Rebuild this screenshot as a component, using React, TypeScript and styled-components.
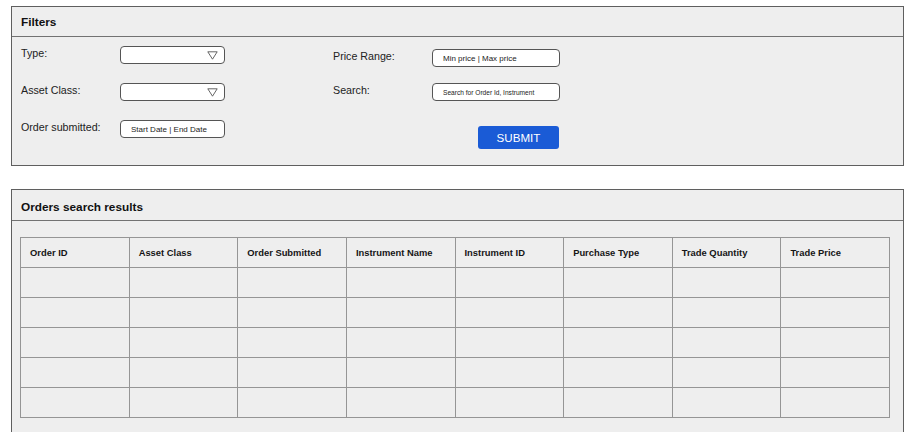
import styled, { createGlobalStyle } from "styled-components";

const GlobalStyle = createGlobalStyle`
  html, body {
    margin: 0;
    padding: 0;
    background: #ffffff;
  }
  body {
    font-family: "Liberation Sans", Arial, sans-serif;
    color: #1f1f1f;
  }
`;

const Page = styled.div`
  display: flex;
  flex-direction: column;
  gap: 23px;
  padding: 6px 0 0 11px;
`;

const Panel = styled.section`
  width: 893px;
  box-sizing: border-box;
  border: 1px solid #5f5f5f;
  background: #eeeeee;
`;

const PanelHeader = styled.div<{ $height: number; $nudge: number }>`
  height: ${(p) => p.$height}px;
  box-sizing: border-box;
  display: flex;
  align-items: center;
  padding: ${(p) => p.$nudge}px 0 0 9px;
  border-bottom: 1px solid #727272;
  font-size: 11.8px;
  font-weight: 700;
  color: #111111;
`;

const FilterBody = styled.div`
  display: grid;
  grid-template-columns: 312px 1fr;
  padding: 9px 0 16px 9px;
`;

const Column = styled.div<{ $gap: number; $offset: number }>`
  display: flex;
  flex-direction: column;
  gap: ${(p) => p.$gap}px;
  padding-top: ${(p) => p.$offset}px;
`;

const Field = styled.div`
  display: flex;
  align-items: flex-start;
`;

const Label = styled.span`
  width: 99px;
  font-size: 10.7px;
  line-height: 14px;
  color: #222222;
`;

const Box = styled.div<{ $width: number; $size: number }>`
  width: ${(p) => p.$width}px;
  height: 18px;
  box-sizing: border-box;
  display: flex;
  align-items: center;
  justify-content: space-between;
  padding: 0 6px 0 10px;
  border: 1px solid #555555;
  border-radius: 4px;
  background: #ffffff;
  font-size: ${(p) => p.$size}px;
  color: #222222;
  white-space: nowrap;
`;

const Caret = styled.svg`
  width: 11px;
  height: 9px;
  flex-shrink: 0;
`;

const Actions = styled.div`
  padding-left: 145px;
  margin-top: 9px;
`;

const SubmitButton = styled.button`
  width: 81px;
  height: 23px;
  border: none;
  border-radius: 3px;
  background: #1a5bd6;
  color: #ffffff;
  font-family: "Liberation Sans", Arial, sans-serif;
  font-size: 11.6px;
  padding: 0;
  cursor: pointer;
`;

const ResultsBody = styled.div`
  padding: 16px 13px 20px 8px;
`;

const Table = styled.table`
  width: 870px;
  border-collapse: collapse;
  table-layout: fixed;
`;

const Th = styled.th`
  height: 29px;
  padding: 0 9px;
  border: 1px solid #959595;
  text-align: left;
  font-size: 9.4px;
  font-weight: 700;
  color: #151515;
`;

const Td = styled.td`
  height: 29px;
  padding: 0;
  border: 1px solid #959595;
`;

const columns = [
  "Order ID",
  "Asset Class",
  "Order Submitted",
  "Instrument Name",
  "Instrument ID",
  "Purchase Type",
  "Trade Quantity",
  "Trade Price",
];

const rows = [0, 1, 2, 3, 4];

function DropCaret() {
  return (
    <Caret viewBox="0 0 11 9">
      <path d="M0.8 0.8 L10.2 0.8 L5.5 8.2 Z" fill="none" stroke="#555" strokeWidth="0.9" strokeLinejoin="round" />
    </Caret>
  );
}

export default function App() {
  return (
    <>
      <GlobalStyle />
      <Page>
        <Panel>
          <PanelHeader $height={30} $nudge={1}>Filters</PanelHeader>
          <FilterBody>
            <Column $gap={19} $offset={0}>
              <Field>
                <Label>Type:</Label>
                <Box $width={105} $size={8}>
                  <span />
                  <DropCaret />
                </Box>
              </Field>
              <Field>
                <Label>Asset Class:</Label>
                <Box $width={105} $size={8}>
                  <span />
                  <DropCaret />
                </Box>
              </Field>
              <Field>
                <Label>Order submitted:</Label>
                <Box $width={105} $size={8}>Start Date | End Date</Box>
              </Field>
            </Column>
            <Column $gap={16} $offset={3}>
              <Field>
                <Label>Price Range:</Label>
                <Box $width={128} $size={8}>Min price | Max price</Box>
              </Field>
              <Field>
                <Label>Search:</Label>
                <Box $width={128} $size={6.6}>Search for Order Id, Instrument</Box>
              </Field>
              <Actions>
                <SubmitButton>SUBMIT</SubmitButton>
              </Actions>
            </Column>
          </FilterBody>
        </Panel>

        <Panel>
          <PanelHeader $height={31} $nudge={3}>Orders search results</PanelHeader>
          <ResultsBody>
            <Table>
              <thead>
                <tr>
                  {columns.map((c) => (
                    <Th key={c}>{c}</Th>
                  ))}
                </tr>
              </thead>
              <tbody>
                {rows.map((r) => (
                  <tr key={r}>
                    {columns.map((c) => (
                      <Td key={c} />
                    ))}
                  </tr>
                ))}
              </tbody>
            </Table>
          </ResultsBody>
        </Panel>
      </Page>
    </>
  );
}
